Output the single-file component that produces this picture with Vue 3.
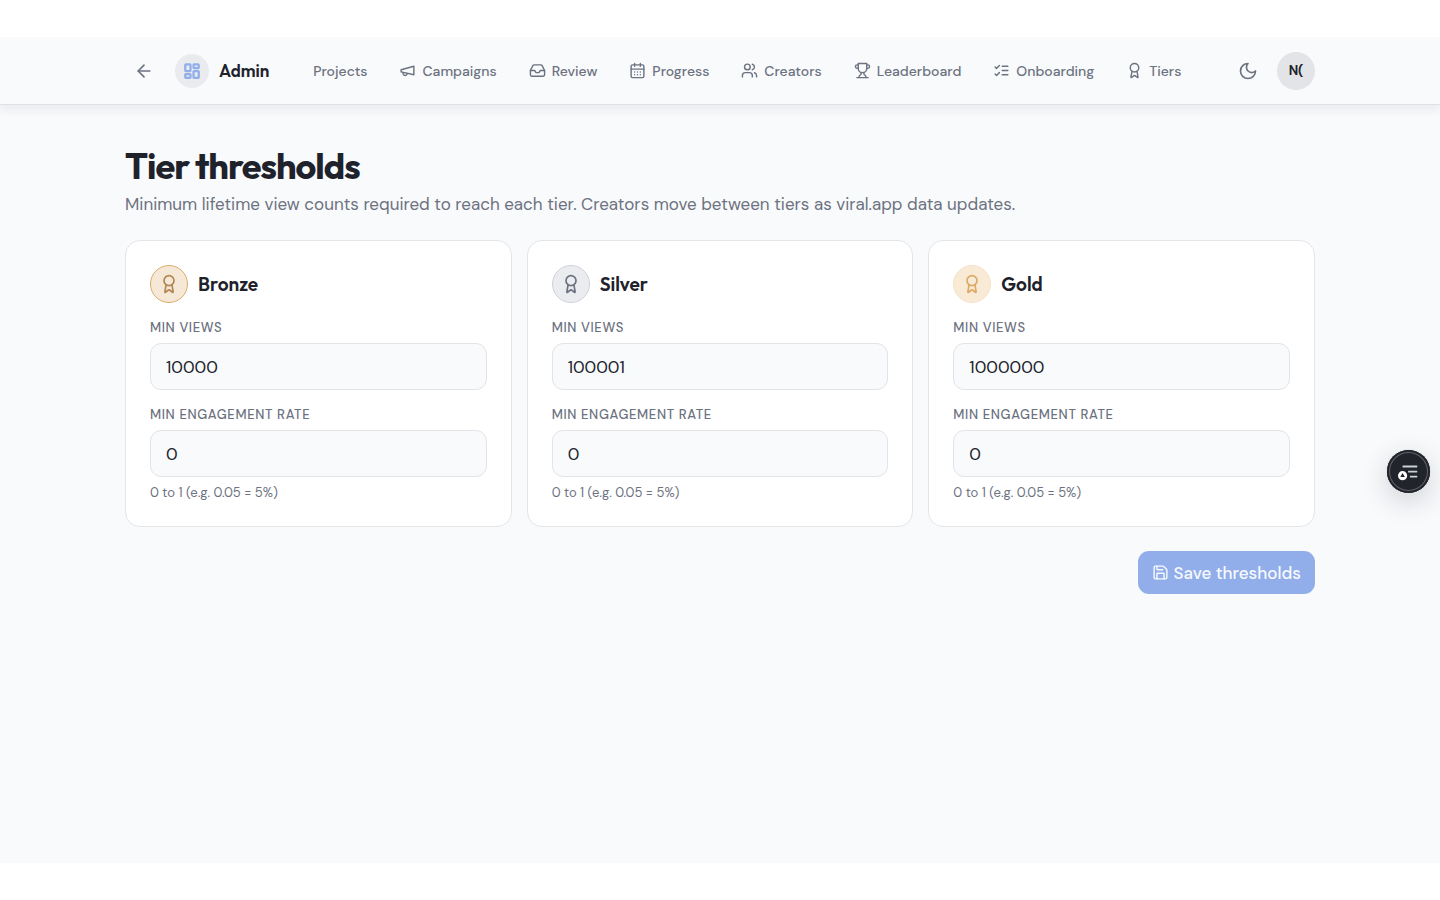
<template>
  <div class="screen">
    <div class="frame">
      <header class="topbar">
        <div class="container topbar-inner">
          <button class="icon-btn" type="button" aria-label="Back">
            <svg class="icon" viewBox="0 0 24 24"><path d="m12 19-7-7 7-7" /><path d="M19 12H5" /></svg>
          </button>

          <a class="brand" href="#">
            <span class="brand-mark">
              <svg class="icon" viewBox="0 0 24 24">
                <rect x="3" y="3" width="7" height="9" rx="1" />
                <rect x="14" y="3" width="7" height="5" rx="1" />
                <rect x="14" y="12" width="7" height="9" rx="1" />
                <rect x="3" y="16" width="7" height="5" rx="1" />
              </svg>
            </span>
            Admin
          </a>

          <nav class="nav">
            <a v-for="item in navItems" :key="item.label" class="nav-link" href="#">
              <svg v-if="item.paths" class="icon" viewBox="0 0 24 24">
                <path v-for="d in item.paths" :key="d" :d="d" />
              </svg>
              {{ item.label }}
            </a>
          </nav>

          <div class="actions">
            <button class="icon-btn" type="button" aria-label="Toggle theme">
              <svg class="icon" viewBox="0 0 24 24"><path d="M12 3a6 6 0 0 0 9 9 9 9 0 1 1-9-9Z" /></svg>
            </button>
            <button class="avatar" type="button">N(</button>
          </div>
        </div>
      </header>

      <main class="container content">
        <h1>Tier thresholds</h1>
        <p class="desc">
          Minimum lifetime view counts required to reach each tier. Creators move between tiers as viral.app data updates.
        </p>

        <form @submit.prevent>
          <div class="tiers">
            <section v-for="tier in tiers" :key="tier.id" class="card">
              <div class="card-head">
                <span class="badge" :class="tier.id">
                  <svg class="icon" viewBox="0 0 24 24">
                    <path v-for="d in awardPaths" :key="d" :d="d" />
                  </svg>
                </span>
                <h2>{{ tier.name }}</h2>
              </div>

              <div class="field">
                <label :for="tier.id + '-views'">Min views</label>
                <input :id="tier.id + '-views'" v-model="tier.views" type="text" inputmode="numeric" />
              </div>

              <div class="field">
                <label :for="tier.id + '-rate'">Min engagement rate</label>
                <input :id="tier.id + '-rate'" v-model="tier.rate" type="text" inputmode="decimal" />
                <p class="hint">0 to 1 (e.g. 0.05 = 5%)</p>
              </div>
            </section>
          </div>

          <div class="form-actions">
            <button class="save-btn" type="submit" disabled>
              <svg class="icon" viewBox="0 0 24 24">
                <path d="M15.2 3a2 2 0 0 1 1.4.6l3.8 3.8a2 2 0 0 1 .6 1.4V19a2 2 0 0 1-2 2H5a2 2 0 0 1-2-2V5a2 2 0 0 1 2-2z" />
                <path d="M17 21v-7a1 1 0 0 0-1-1H8a1 1 0 0 0-1 1v7" />
                <path d="M7 3v4a1 1 0 0 0 1 1h7" />
              </svg>
              Save thresholds
            </button>
          </div>
        </form>
      </main>
    </div>

    <button class="fab" type="button" aria-label="Open panel">
      <svg viewBox="0 0 24 24">
        <path class="line" d="M5 6h16M11 11.5h10M13 17h8" />
        <circle class="dot" cx="5" cy="16" r="5" />
        <path class="mark" d="M5 13.2l2.5 4.2h-5z" />
      </svg>
    </button>
  </div>
</template>

<script setup>
import { reactive } from 'vue'

const awardPaths = [
  'm15.477 12.89 1.515 8.526a.5.5 0 0 1-.81.47l-3.58-2.687a1 1 0 0 0-1.197 0l-3.586 2.686a.5.5 0 0 1-.81-.469l1.514-8.526',
  'M12 2a6 6 0 1 0 0 12a6 6 0 1 0 0-12'
]

const navItems = [
  { label: 'Projects' },
  { label: 'Campaigns', paths: ['m3 11 18-5v12L3 14v-3z', 'M11.6 16.8a3 3 0 1 1-5.8-1.6'] },
  {
    label: 'Review',
    paths: [
      'M22 12h-6l-2 3h-4l-2-3H2',
      'M5.45 5.11 2 12v6a2 2 0 0 0 2 2h16a2 2 0 0 0 2-2v-6l-3.45-6.89A2 2 0 0 0 16.76 4H7.24a2 2 0 0 0-1.79 1.11z'
    ]
  },
  {
    label: 'Progress',
    paths: [
      'M8 2v4M16 2v4',
      'M5 4h14a2 2 0 0 1 2 2v14a2 2 0 0 1-2 2H5a2 2 0 0 1-2-2V6a2 2 0 0 1 2-2z',
      'M3 10h18',
      'M8 14h.01M12 14h.01M16 14h.01M8 18h.01M12 18h.01M16 18h.01'
    ]
  },
  {
    label: 'Creators',
    paths: [
      'M16 21v-2a4 4 0 0 0-4-4H6a4 4 0 0 0-4 4v2',
      'M9 3a4 4 0 1 0 0 8a4 4 0 1 0 0-8',
      'M22 21v-2a4 4 0 0 0-3-3.87',
      'M16 3.13a4 4 0 0 1 0 7.75'
    ]
  },
  {
    label: 'Leaderboard',
    paths: [
      'M6 9H4.5a2.5 2.5 0 0 1 0-5H6',
      'M18 9h1.5a2.5 2.5 0 0 0 0-5H18',
      'M4 22h16',
      'M10 14.66V17c0 .55-.47.98-.97 1.21C7.85 18.75 7 20.24 7 22',
      'M14 14.66V17c0 .55.47.98.97 1.21C16.15 18.75 17 20.24 17 22',
      'M18 2H6v7a6 6 0 0 0 12 0V2Z'
    ]
  },
  { label: 'Onboarding', paths: ['m3 17 2 2 4-4', 'm3 7 2 2 4-4', 'M13 6h8M13 12h8M13 18h8'] },
  { label: 'Tiers', paths: awardPaths }
]

const tiers = reactive([
  { id: 'bronze', name: 'Bronze', views: '10000', rate: '0' },
  { id: 'silver', name: 'Silver', views: '100001', rate: '0' },
  { id: 'gold', name: 'Gold', views: '1000000', rate: '0' }
])
</script>

<style>
body {
  margin: 0;
  background: #fff;
}
</style>

<style scoped>
.screen {
  padding: 37px 0;
  color: #20222b;
  font-family: 'DM Sans', Inter, 'Liberation Sans', sans-serif;
  font-size: 17px;
}

.screen *,
.screen *::before {
  box-sizing: border-box;
}

.frame {
  min-height: calc(100vh - 74px);
  background: #f9fafc;
}

.container {
  width: calc(100% - 48px);
  max-width: 1190px;
  margin: 0 auto;
}

.icon {
  flex: none;
  width: 17px;
  height: 17px;
  fill: none;
  stroke: currentColor;
  stroke-width: 2;
  stroke-linecap: round;
  stroke-linejoin: round;
}

button {
  padding: 0;
  border: 0;
  font-family: inherit;
  cursor: pointer;
}

.topbar {
  border-bottom: 1px solid #dfe1e5;
  box-shadow: 0 6px 8px rgba(30, 35, 45, 0.06);
}

.topbar-inner {
  display: flex;
  align-items: center;
  height: 67px;
}

.icon-btn {
  display: grid;
  place-items: center;
  width: 38px;
  height: 38px;
  background: none;
  color: #6c7280;
}

.icon-btn .icon {
  width: 20px;
  height: 20px;
}

.brand {
  display: flex;
  align-items: center;
  gap: 10px;
  margin-left: 12px;
  color: #20222b;
  font-family: Outfit, Lato, 'Liberation Sans', sans-serif;
  font-size: 17px;
  font-weight: 600;
  text-decoration: none;
}

.brand-mark {
  display: grid;
  place-items: center;
  width: 34px;
  height: 34px;
  border-radius: 50%;
  background: #e9ebee;
  color: #91aeea;
}

.brand-mark .icon {
  width: 18px;
  height: 18px;
  stroke-width: 3;
}

.nav {
  display: flex;
  gap: 8px;
  margin-left: 32px;
}

.nav-link {
  display: flex;
  align-items: center;
  gap: 6px;
  padding: 8px 12px;
  color: #6c7280;
  font-size: 14px;
  font-weight: 500;
  line-height: 20px;
  text-decoration: none;
  white-space: nowrap;
}

.actions {
  display: flex;
  align-items: center;
  gap: 10px;
  margin-left: auto;
}

.avatar {
  width: 38px;
  height: 38px;
  border-radius: 50%;
  background: #e3e4e8;
  color: #20222b;
  font-size: 13px;
  font-weight: 700;
}

.content {
  padding: 41px 0 48px;
}

h1 {
  margin: 0 0 6px;
  font-family: Outfit, Lato, 'Liberation Sans', sans-serif;
  font-size: 36px;
  font-weight: 700;
  line-height: 40px;
  letter-spacing: -1px;
}

.desc {
  margin: 0 0 24px;
  color: #6c7280;
  font-size: 17px;
  line-height: 24px;
}

.tiers {
  display: grid;
  grid-template-columns: repeat(3, 1fr);
  gap: 15px;
}

.card {
  display: flex;
  flex-direction: column;
  gap: 16px;
  padding: 24px;
  border: 1px solid #e3e5e9;
  border-radius: 15px;
  background: #fff;
}

.card-head {
  display: flex;
  align-items: center;
  gap: 10px;
}

.card-head h2 {
  margin: 0;
  font-family: Outfit, Lato, 'Liberation Sans', sans-serif;
  font-size: 19px;
  font-weight: 600;
}

.badge {
  display: grid;
  place-items: center;
  width: 38px;
  height: 38px;
  border: 1px solid;
  border-radius: 50%;
}

.badge .icon {
  width: 20px;
  height: 20px;
}

.badge.bronze {
  border-color: #dcab6b;
  background: #f5e8d7;
  color: #b3864f;
}

.badge.silver {
  border-color: #cfd2d7;
  background: #ebecef;
  color: #6c7280;
}

.badge.gold {
  border-color: #f5e3c9;
  background: #f9ead5;
  color: #dcaa65;
}

.field {
  display: flex;
  flex-direction: column;
  gap: 6px;
}

.field label {
  color: #6c7280;
  font-size: 13px;
  font-weight: 500;
  line-height: 18px;
  letter-spacing: 0.05em;
  text-transform: uppercase;
}

.field input {
  width: 100%;
  height: 47px;
  padding: 0 15px;
  border: 1px solid #e2e4e8;
  border-radius: 11px;
  background: #f9fafc;
  color: #20222b;
  font-family: inherit;
  font-size: 17px;
}

.hint {
  margin: 0;
  color: #6c7280;
  font-size: 13px;
  line-height: 19px;
}

.form-actions {
  display: flex;
  justify-content: flex-end;
  margin-top: 24px;
}

.save-btn {
  display: flex;
  align-items: center;
  gap: 5px;
  height: 43px;
  padding: 0 14px;
  border-radius: 11px;
  background: #91aeea;
  color: #f7f9fd;
  font-size: 17px;
  font-weight: 500;
}

.fab {
  position: fixed;
  top: 50%;
  right: 10px;
  display: grid;
  place-items: center;
  width: 43px;
  height: 43px;
  border-radius: 50%;
  background: #22242b;
  box-shadow: 0 0 0 1px #e4e5e8, inset 0 0 0 2px #22242b, inset 0 0 0 3px #5d6068, 0 8px 28px rgba(30, 35, 45, 0.2);
}

.fab svg {
  width: 22px;
  height: 22px;
}

.line {
  fill: none;
  stroke: #c9d2d6;
  stroke-width: 2;
}

.dot {
  fill: #fff;
}

.mark {
  fill: #22242b;
}
</style>
